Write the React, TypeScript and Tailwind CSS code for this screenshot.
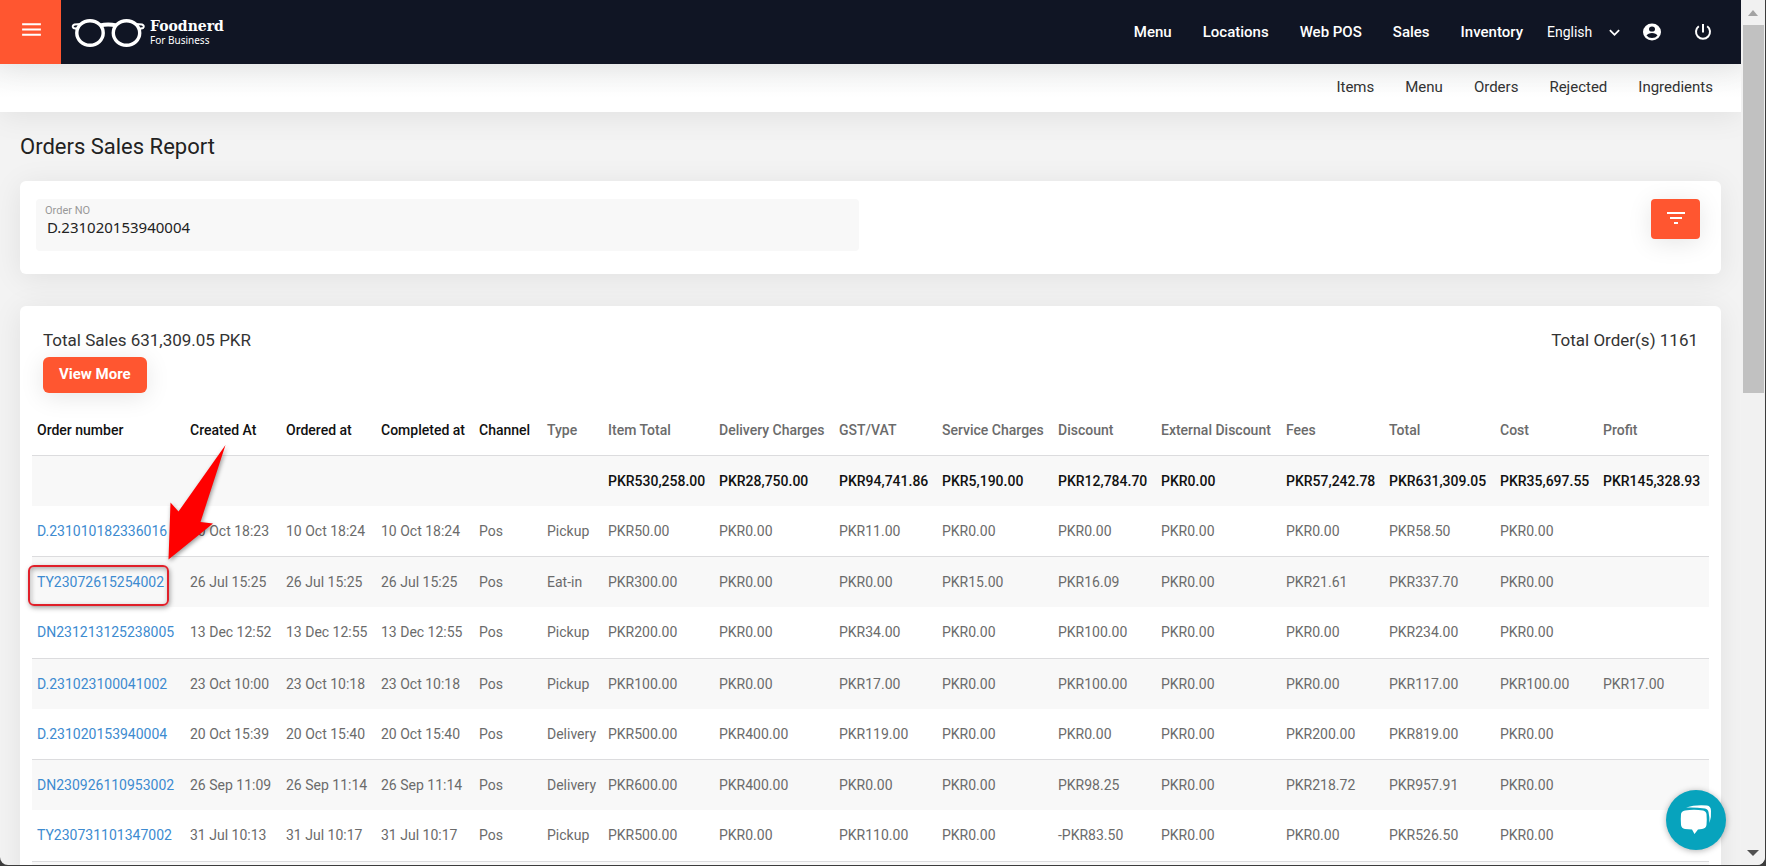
import React, { useState } from 'react';
import { MdExpandMore, MdFilterList, MdMenu } from 'react-icons/md';

const mainLinks = ['Menu', 'Locations', 'Web POS', 'Sales', 'Inventory'];
const subLinks = ['Items', 'Menu', 'Orders', 'Rejected', 'Ingredients'];

const columns = [
  { name: 'Order number', width: 'w-[153px]', sortable: true },
  { name: 'Created At', width: 'w-[96px]', sortable: true },
  { name: 'Ordered at', width: 'w-[95px]', sortable: true },
  { name: 'Completed at', width: 'w-[98px]', sortable: true },
  { name: 'Channel', width: 'w-[68px]', sortable: true },
  { name: 'Type', width: 'w-[61px]' },
  { name: 'Item Total', width: 'w-[111px]' },
  { name: 'Delivery Charges', width: 'w-[120px]' },
  { name: 'GST/VAT', width: 'w-[103px]' },
  { name: 'Service Charges', width: 'w-[116px]' },
  { name: 'Discount', width: 'w-[103px]' },
  { name: 'External Discount', width: 'w-[125px]' },
  { name: 'Fees', width: 'w-[103px]' },
  { name: 'Total', width: 'w-[111px]' },
  { name: 'Cost', width: 'w-[103px]' },
  { name: 'Profit', width: 'w-auto' }
];

const totals = ['', '', '', '', '', '', 'PKR530,258.00', 'PKR28,750.00', 'PKR94,741.86', 'PKR5,190.00', 'PKR12,784.70', 'PKR0.00', 'PKR57,242.78', 'PKR631,309.05', 'PKR35,697.55', 'PKR145,328.93'];

const orders = [
  ['D.231010182336016', '10 Oct 18:23', '10 Oct 18:24', '10 Oct 18:24', 'Pos', 'Pickup', 'PKR50.00', 'PKR0.00', 'PKR11.00', 'PKR0.00', 'PKR0.00', 'PKR0.00', 'PKR0.00', 'PKR58.50', 'PKR0.00', ''],
  ['TY23072615254002', '26 Jul 15:25', '26 Jul 15:25', '26 Jul 15:25', 'Pos', 'Eat-in', 'PKR300.00', 'PKR0.00', 'PKR0.00', 'PKR15.00', 'PKR16.09', 'PKR0.00', 'PKR21.61', 'PKR337.70', 'PKR0.00', ''],
  ['DN231213125238005', '13 Dec 12:52', '13 Dec 12:55', '13 Dec 12:55', 'Pos', 'Pickup', 'PKR200.00', 'PKR0.00', 'PKR34.00', 'PKR0.00', 'PKR100.00', 'PKR0.00', 'PKR0.00', 'PKR234.00', 'PKR0.00', ''],
  ['D.231023100041002', '23 Oct 10:00', '23 Oct 10:18', '23 Oct 10:18', 'Pos', 'Pickup', 'PKR100.00', 'PKR0.00', 'PKR17.00', 'PKR0.00', 'PKR100.00', 'PKR0.00', 'PKR0.00', 'PKR117.00', 'PKR100.00', 'PKR17.00'],
  ['D.231020153940004', '20 Oct 15:39', '20 Oct 15:40', '20 Oct 15:40', 'Pos', 'Delivery', 'PKR500.00', 'PKR400.00', 'PKR119.00', 'PKR0.00', 'PKR0.00', 'PKR0.00', 'PKR200.00', 'PKR819.00', 'PKR0.00', ''],
  ['DN230926110953002', '26 Sep 11:09', '26 Sep 11:14', '26 Sep 11:14', 'Pos', 'Delivery', 'PKR600.00', 'PKR400.00', 'PKR0.00', 'PKR0.00', 'PKR98.25', 'PKR0.00', 'PKR218.72', 'PKR957.91', 'PKR0.00', ''],
  ['TY230731101347002', '31 Jul 10:13', '31 Jul 10:17', '31 Jul 10:17', 'Pos', 'Pickup', 'PKR500.00', 'PKR0.00', 'PKR110.00', 'PKR0.00', '-PKR83.50', 'PKR0.00', 'PKR0.00', 'PKR526.50', 'PKR0.00', '']
];

const highlighted = 'TY23072615254002';

const Logo = () => <a href="#" className="flex items-center gap-1">
    <svg width="75" height="30" viewBox="0 0 75 30" fill="none" stroke="white" aria-hidden="true">
      <ellipse cx="19" cy="16" rx="13.2" ry="12.2" strokeWidth="3.4" />
      <ellipse cx="55.500" cy="16" rx="13.2" ry="12.2" strokeWidth="3.4" />
      <path d="M29 8.500Q37 6.500 45.500 8.500" strokeWidth="4" />
      <path d="M10 7L3.500 7.500Q0.500 9 2.500 11L6.500 12M64.500 7L71 7.500Q74 9 72 11L68 12" strokeWidth="2" />
    </svg>
    <span className="flex flex-col text-white">
      <span className="font-['DejaVu_Serif',serif] text-sm leading-4 font-bold">Foodnerd</span>
      <span className="font-['Noto_Sans',sans-serif] text-[10px] leading-3">For Business</span>
    </span>
  </a>;

const AccountIcon = () => <svg width="20" height="18" viewBox="0 0 20 18" aria-hidden="true">
    <ellipse cx="10" cy="9" rx="9" ry="8.500" fill="white" />
    <ellipse cx="10" cy="6" rx="3" ry="2.600" fill="#101524" />
    <path d="M4.500 12.500Q6 10 10 10Q14 10 15.500 12.500Q13.500 15 10 15Q6.500 15 4.500 12.500Z" fill="#101524" />
  </svg>;

const PowerIcon = () => <svg width="20" height="18" viewBox="0 0 20 18" fill="none" stroke="white" strokeWidth="2" aria-hidden="true">
    <path d="M10 1V9.500M5.800 3.200A7 7 0 1 0 14.200 3.200" />
  </svg>;

const Header = () => <header className="relative flex h-16 shrink-0 items-center justify-between bg-[#101524] pr-7 shadow-[0_4px_30px_rgba(0,0,0,0.08)]">
    <div className="flex items-center gap-[10px]">
      <button type="button" aria-label="Toggle menu" className="flex h-16 w-[61px] items-center justify-center bg-[#ff5630] pb-1.5 pl-0.5 text-white">
        <MdMenu size={25} />
      </button>
      <Logo />
    </div>
    <nav className="flex items-center text-[15px] text-white">
      <div className="flex items-center gap-[31px] font-medium">
        {mainLinks.map(link => <a key={link} href="#">{link}</a>)}
      </div>
      <div className="relative ml-6 flex items-center">
        <select aria-label="Language" className="w-20 appearance-none bg-transparent text-sm">
          <option>English</option>
        </select>
        <MdExpandMore size={21} stroke="white" className="pointer-events-none absolute right-0.5" />
      </div>
      <a href="#" aria-label="Account" className="ml-[15px]">
        <AccountIcon />
      </a>
      <a href="#" aria-label="Log out" className="ml-[31px]">
        <PowerIcon />
      </a>
    </nav>
  </header>;

const Pointer = () => <>
    <span className="pointer-events-none absolute top-2 -left-1 h-[41px] w-[141px] rounded-md border-2 border-[#e0202a] shadow-[1px_2px_5px_rgba(0,0,0,0.35),inset_1px_2px_5px_rgba(0,0,0,0.3)]" />
    <svg className="pointer-events-none absolute -top-28 left-[134px] overflow-visible drop-shadow-[1px_2px_2px_rgba(0,0,0,0.4)]" width="50" height="116" viewBox="0 0 50 116" aria-hidden="true">
      <path d="M59.500 0L34.500 77L47 78.500L2.500 114.500L4.500 57.500L12.500 66.500Z" fill="#ff0000" />
    </svg>
  </>;

const OrdersTable = () => <table className="w-full table-fixed text-left text-sm whitespace-nowrap text-[#6b6b6b]">
    <colgroup>
      {columns.map(col => <col key={col.name} className={col.width} />)}
    </colgroup>
    <thead>
      <tr className="h-[50px]">
        {columns.map(col => <th key={col.name} scope="col" className={`pl-[5px] font-medium ${col.sortable ? 'text-[#111111]' : ''}`}>{col.name}</th>)}
      </tr>
    </thead>
    <tbody>
      <tr className="h-[51px] border-t border-[#dcdcde] bg-[#f8f8f8] font-medium text-[#111111]">
        {totals.map((total, i) => <td key={i} className="pl-[5px]">{total}</td>)}
      </tr>
      {orders.map(([id, ...cells]) => <tr key={id} className="h-[50px] odd:h-[51px] odd:border-t odd:border-[#dcdcde] odd:bg-[#f8f8f8] nth-[4n]:h-[51px]">
          <td className="relative pl-[5px]">
            <a href="#" className="text-[#3d8bd0]">{id}</a>
            {id === highlighted && <Pointer />}
          </td>
          {cells.map((cell, i) => <td key={i} className="pl-[5px]">{cell}</td>)}
        </tr>)}
      <tr className="h-[51px] border-t border-[#dcdcde] bg-[#f8f8f8]">
        <td colSpan={16}></td>
      </tr>
    </tbody>
  </table>;

const ScrollTrack = () => <div className="flex w-6 shrink-0 flex-col items-center bg-[#f1f1f1]" aria-hidden="true">
    <svg className="h-[25px] w-5 shrink-0" viewBox="0 0 20 25">
      <path d="M10 10L15 16H5Z" fill="#a3a3a3" />
    </svg>
    <div className="h-[42.5%] w-[21px] bg-[#c1c1c1]" />
    <svg className="mt-auto h-[25px] w-5 shrink-0" viewBox="0 0 20 25">
      <path d="M4 10H16L10 16Z" fill="#505050" />
    </svg>
  </div>;

const App = () => {
  const [orderNo, setOrderNo] = useState('D.231020153940004');
  return <div className="h-screen bg-[#3c3c3c] pr-px pb-px font-[Roboto,sans-serif]">
      <div className="relative flex h-full overflow-hidden rounded-b-lg bg-[#f3f3f3]">
        <div className="flex min-w-0 flex-1 flex-col overflow-hidden">
          <Header />
          <nav className="flex h-12 shrink-0 items-center justify-end gap-[31px] bg-linear-to-b from-[#f4f5f5] to-white to-70% pr-7 pb-0.5 text-[15px] text-[#333333] shadow-[0_4px_30px_rgba(0,0,0,0.08)]">
            {subLinks.map(link => <a key={link} href="#">{link}</a>)}
          </nav>
          <main className="px-5">
            <h1 className="pt-[21px] pb-5 text-[22px] leading-7 text-[#222222]">Orders Sales Report</h1>
            <section className="flex items-start justify-between rounded-md bg-white px-4 pt-[18px] pb-[23px] shadow-[0_4px_30px_rgba(0,0,0,0.08)]">
              <div className="flex h-[52px] w-[calc(50%-12px)] flex-col rounded-sm bg-[#f8f8f8] px-[9px] pt-1">
                <label htmlFor="order-no" className="text-[11px] leading-4 text-[#999999]">Order NO</label>
                <input id="order-no" type="text" value={orderNo} onChange={e => setOrderNo(e.target.value)} className="bg-transparent px-0.5 font-['Noto_Sans',sans-serif] text-[15px] leading-4 text-[#222222] outline-none" />
              </div>
              <button type="button" aria-label="Filter" className="mr-[5px] flex h-10 w-[49px] items-center justify-center rounded-sm bg-[#ff5630] pb-0.5 text-white shadow-[0_4px_24px_rgba(0,0,0,0.1)]">
                <MdFilterList size={24} stroke="white" />
              </button>
            </section>
            <section className="mt-8 rounded-md bg-white px-3 pt-6 shadow-[0_4px_30px_rgba(0,0,0,0.08)]">
              <div className="flex items-start justify-between px-[11px] text-[17px] leading-5 text-[#333333]">
                <div>
                  <p>Total Sales 631,309.05 PKR</p>
                  <button type="button" className="mt-[7px] h-9 rounded-md bg-[#ff5630] px-4 pb-0.5 text-[15px] font-bold text-white shadow-[0_4px_24px_rgba(0,0,0,0.1)]">View More</button>
                </div>
                <p>Total Order(s) 1161</p>
              </div>
              <div className="mt-3">
                <OrdersTable />
              </div>
            </section>
          </main>
        </div>
        <ScrollTrack />
        <button type="button" aria-label="Open chat" className="absolute right-[39px] bottom-[15px] flex size-[60px] items-center justify-center rounded-full bg-[#07a3bd] text-white shadow-[0_1px_6px_rgba(0,0,0,0.3)]">
          <svg width="32" height="32" viewBox="0 0 32 32" fill="none" aria-hidden="true">
            <path d="M6 3.500Q15 0.500 27 1.500Q31 2 31 7Q31.500 13 29.500 19Q29.500 12 28.500 8Q28 5 25 4.500Q15 3 6 3.500Z" fill="white" />
            <path d="M5 6.500Q14 5 23 6.500Q26 7 26.500 10Q27 16 26.500 21Q26 24.500 22 25L18 25.500L14.500 30L12 25.500L5 25Q1.500 24.500 1 21Q0.500 15 1 10Q1.500 7 5 6.500Z" fill="white" />
          </svg>
        </button>
      </div>
    </div>;
};
export default App;
